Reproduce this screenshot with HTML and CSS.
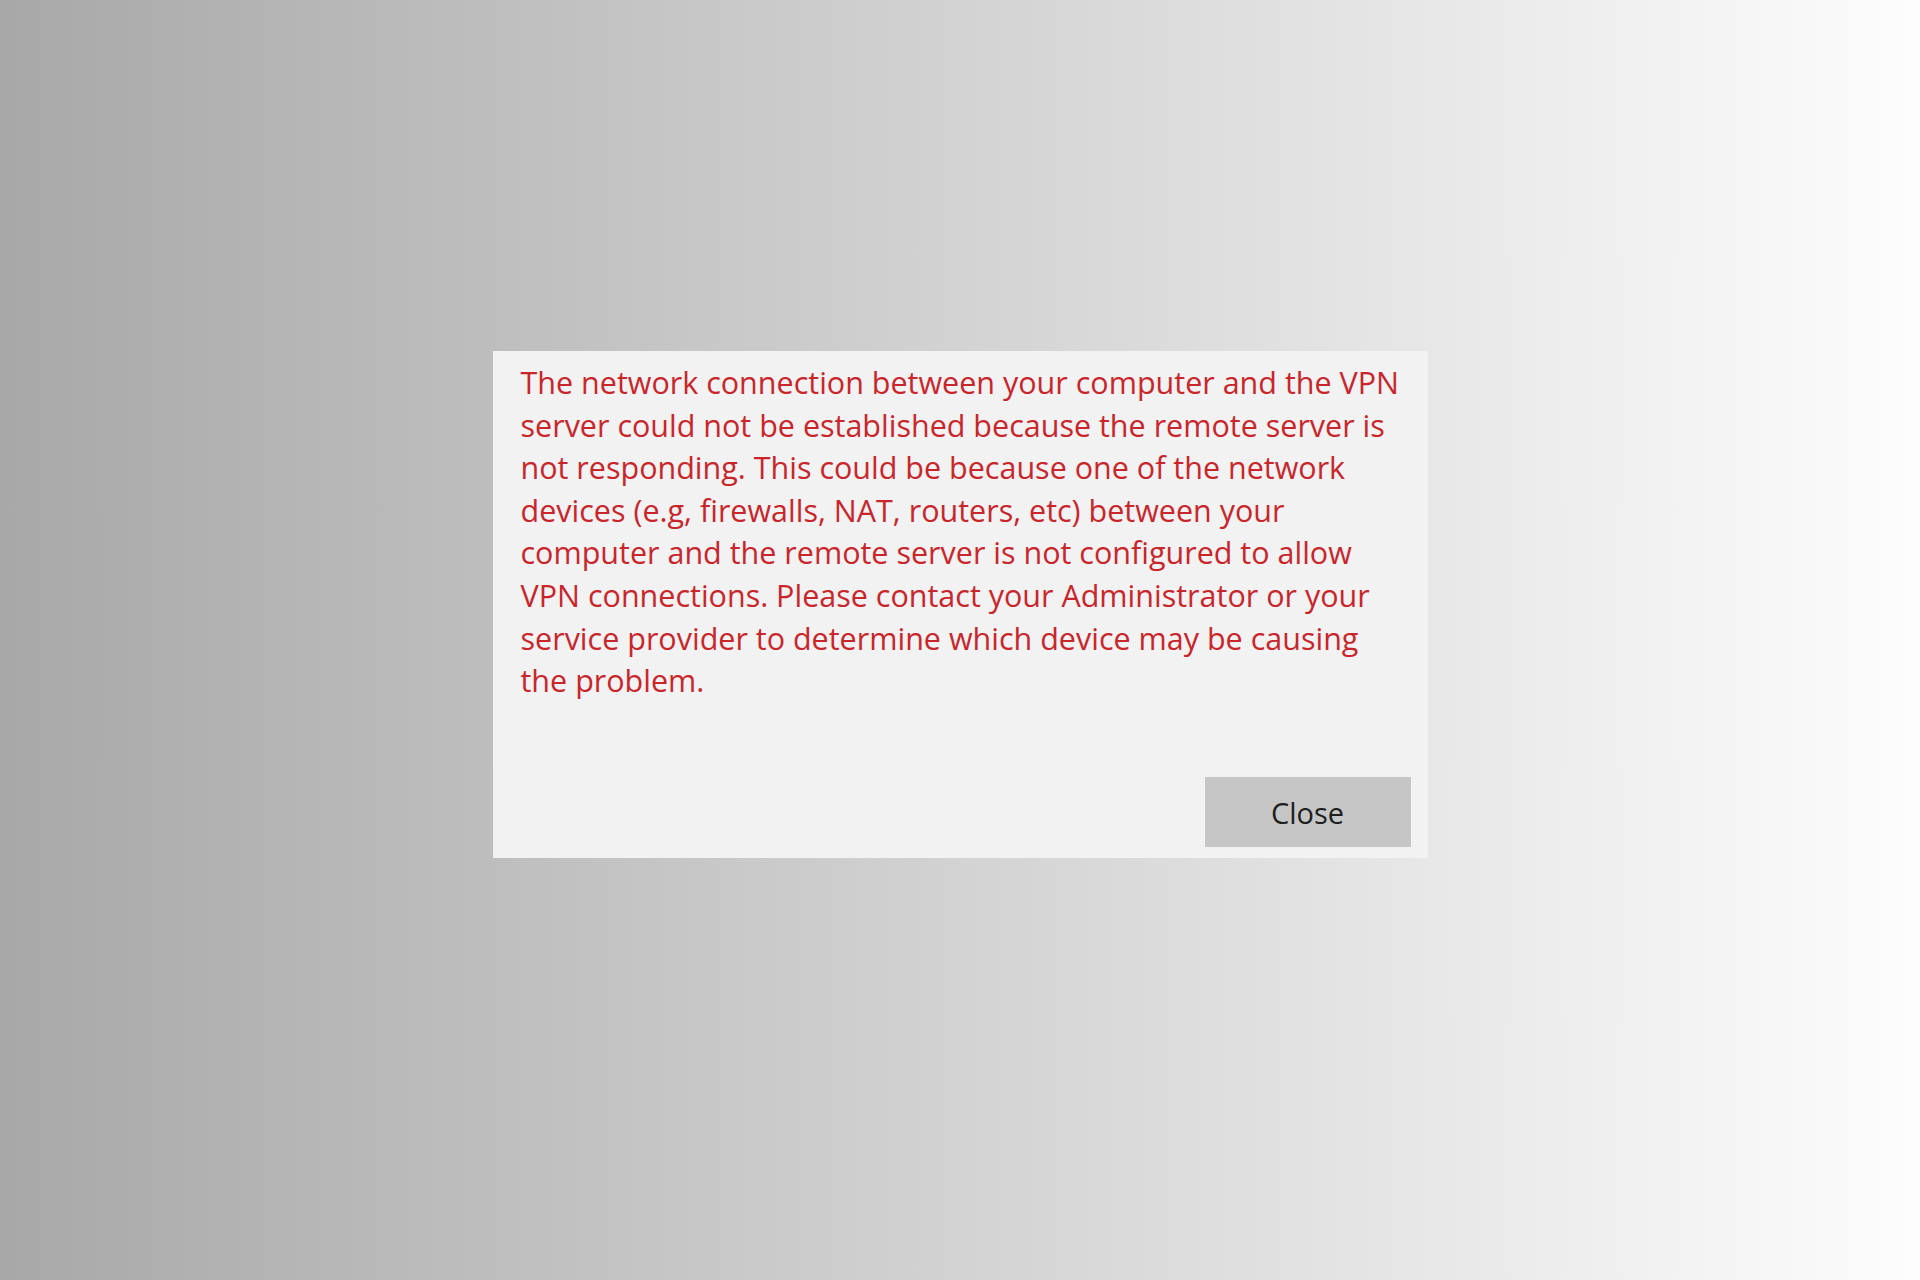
FILE: index.html
```html
<!DOCTYPE html>
<html lang="en">
<head>
<meta charset="utf-8">
<title>VPN error</title>
<link rel="stylesheet" href="styles.css">
</head>
<body>
<div class="page">
  <div class="dialog">
    <p class="message">
      <span class="line">The network connection between your computer and the VPN</span>
      <span class="line">server could not be established because the remote server is</span>
      <span class="line">not responding. This could be because one of the network</span>
      <span class="line">devices (e.g, firewalls, NAT, routers, etc) between your</span>
      <span class="line">computer and the remote server is not configured to allow</span>
      <span class="line">VPN connections. Please contact your Administrator or your</span>
      <span class="line">service provider to determine which device may be causing</span>
      <span class="line">the problem.</span>
    </p>
    <button class="close-btn">Close</button>
  </div>
</div>
</body>
</html>
```
FILE: styles.css
```css
html, body {
  margin: 0;
  padding: 0;
}
body {
  width: 1920px;
  height: 1280px;
  background: linear-gradient(to right, #a8a8a8 0%, #fdfdfd 100%);
  font-family: "Open Sans", "Noto Sans", sans-serif;
}
.page {
  display: flex;
  justify-content: center;
  padding-top: 351px;
}
.dialog {
  box-sizing: border-box;
  width: 935px;
  height: 507px;
  background: #f2f2f2;
  display: flex;
  flex-direction: column;
  padding: 10px 17px 11px 28px;
}
.message {
  margin: 0;
  color: #c9262c;
  font-size: 30.5px;
  line-height: 42.6px;
  letter-spacing: 0;
}
.line {
  display: block;
  white-space: nowrap;
}
.close-btn {
  margin-top: auto;
  align-self: flex-end;
  width: 206px;
  height: 70px;
  border: none;
  background: #c6c6c6;
  color: #1e1e1e;
  font-family: "Open Sans", "Noto Sans", sans-serif;
  font-size: 29px;
  padding: 0;
}
```
